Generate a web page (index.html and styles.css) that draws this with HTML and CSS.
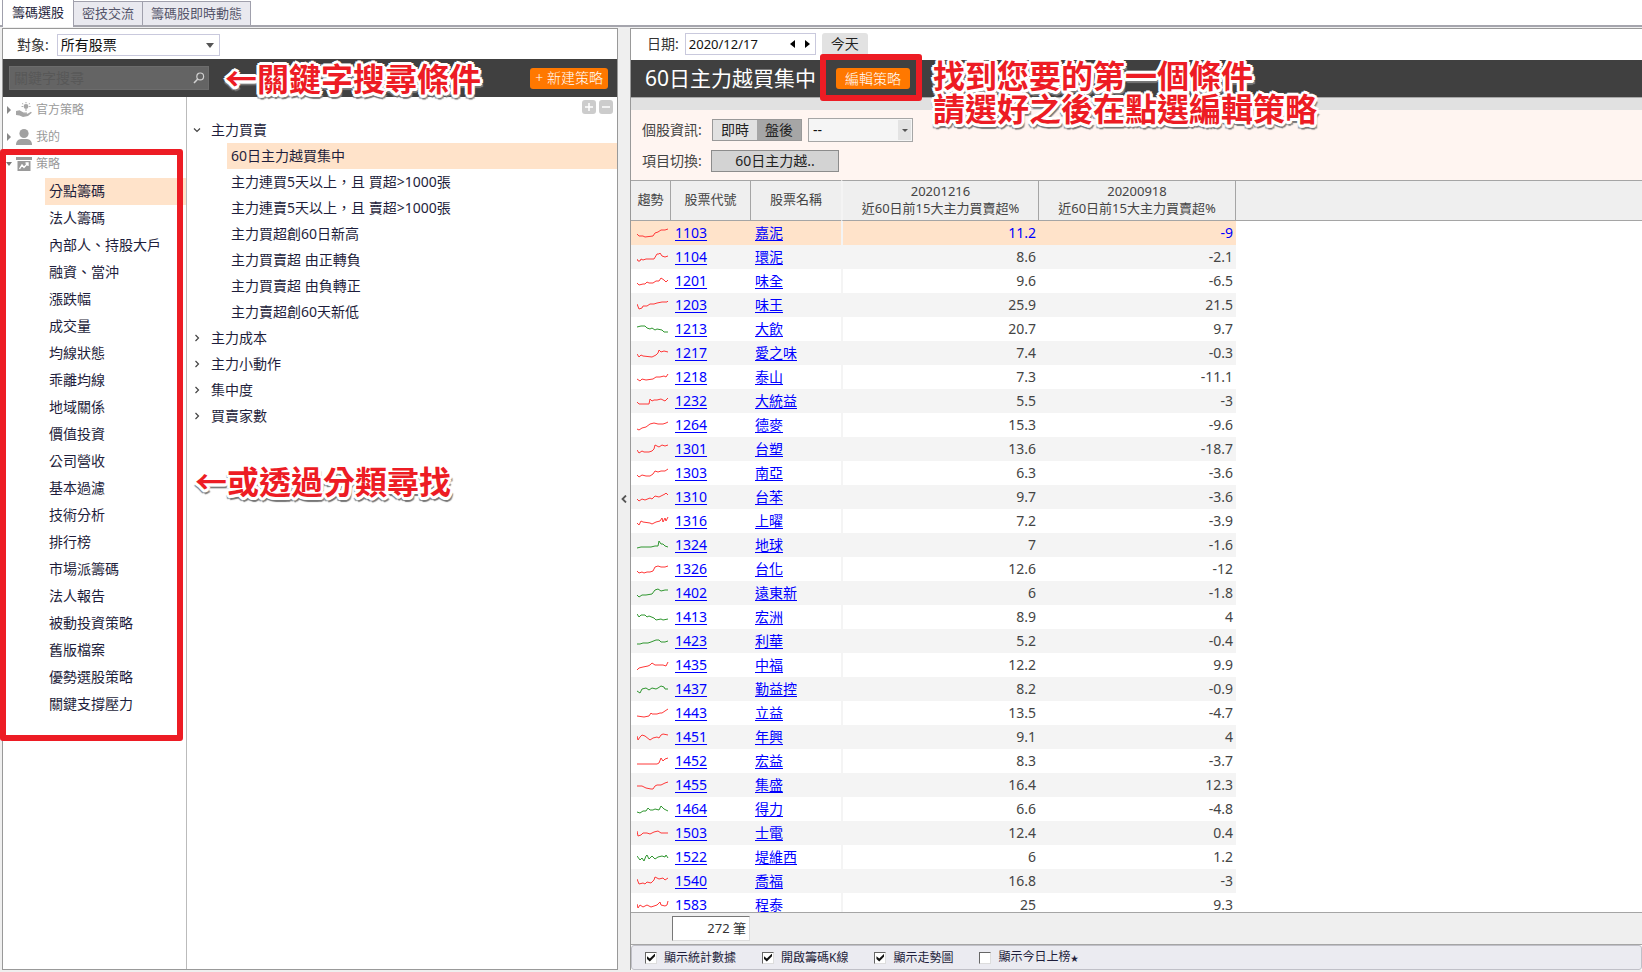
FILE: index.html
```html
<!DOCTYPE html>
<html lang="zh-Hant">
<head>
<meta charset="utf-8">
<title>籌碼選股</title>
<link rel="stylesheet" href="styles.css">
</head>
<body>
<nav class="tabs">
  <button class="tab tab-active" type="button">籌碼選股</button>
  <button class="tab" type="button">密技交流</button>
  <button class="tab" type="button">籌碼股即時動態</button>
</nav>

<main class="workspace">
  <section class="panel panel-left">
    <div class="target-row">
      <label for="target">對象:</label>
      <span class="select-wrap target-select">
        <select id="target"><option>所有股票</option></select>
        <svg class="caret" viewBox="0 0 8 5" width="8" height="5"><path d="M0 0h8L4 5z" fill="#555"/></svg>
      </span>
    </div>
    <div class="dark-bar search-bar">
      <div class="search">
        <input type="text" placeholder="關鍵字搜尋" aria-label="關鍵字搜尋">
        <svg viewBox="0 0 12 12" width="12" height="12"><circle cx="7.2" cy="4.4" r="3.4" fill="none" stroke="#d0d0d0" stroke-width="1.2"/><path d="M4.8 7L1 11" stroke="#d0d0d0" stroke-width="1.6"/></svg>
      </div>
      <button class="orange-btn" type="button">+ 新建策略</button>
    </div>
    <div class="left-body">
      <aside class="sidebar">
        <div class="group">
          <svg class="twist" viewBox="0 0 4 8" width="4" height="8"><path d="M0 0l4 4-4 4z" fill="#888"/></svg>
          <svg viewBox="0 0 16 16" width="16" height="16"><g fill="#a6a6a6"><circle cx="10" cy="4.5" r="2.4"/><path d="M9.5 0h1v1.3h-1zM5.6 4h1.3v1H5.600zM13.200 4h1.300v1h-1.300zM6.500 1l1 .9-.6.6-1-1zM13.500 1l.6.6-1 .9-.6-.6zM9 7.500h2v1H9z"/><path d="M0 9l3.500-.8 4 2.300H11v1H7l4.500.3 3.500-2 .8 1-3.800 3.200L7 15l-3.500-1.500L0 13z"/></g></svg>
          <span>官方策略</span>
        </div>
        <div class="group">
          <svg class="twist" viewBox="0 0 4 8" width="4" height="8"><path d="M0 0l4 4-4 4z" fill="#888"/></svg>
          <svg viewBox="0 0 16 16" width="16" height="16"><g fill="#a0a0a0"><ellipse cx="8" cy="4.500" rx="4.600" ry="4.500"/><path d="M0 16c0-4 2-5.500 5-6h6c3 .5 5 2 5 6z"/></g></svg>
          <span>我的</span>
        </div>
        <div class="group">
          <svg class="twist" viewBox="0 0 6 4" width="6" height="4"><path d="M0 0h6L3 4z" fill="#777"/></svg>
          <svg viewBox="0 0 16 16" width="16" height="16"><path d="M0 1h16v3H0zM1.500 5h13v10h-13z" fill="#9a9a9a"/><path d="M3.500 13l2.500-4 2 2.500L12 7M9.500 7H12v3" fill="none" stroke="#fff" stroke-width="1.400"/></svg>
          <span>策略</span>
        </div>
        <ul class="categories">
          <li class="selected">分點籌碼</li>
          <li>法人籌碼</li>
          <li>內部人、持股大戶</li>
          <li>融資、當沖</li>
          <li>漲跌幅</li>
          <li>成交量</li>
          <li>均線狀態</li>
          <li>乖離均線</li>
          <li>地域關係</li>
          <li>價值投資</li>
          <li>公司營收</li>
          <li>基本過濾</li>
          <li>技術分析</li>
          <li>排行榜</li>
          <li>市場派籌碼</li>
          <li>法人報告</li>
          <li>被動投資策略</li>
          <li>舊版檔案</li>
          <li>優勢選股策略</li>
          <li>關鍵支撐壓力</li>
        </ul>
      </aside>
      <div class="tree">
        <div class="tree-tools">
          <button type="button" aria-label="全部展開"><svg viewBox="0 0 14 14" width="14" height="14"><path d="M3 7h8M7 3v8" stroke="#fff" stroke-width="1.500"/></svg></button>
          <button type="button" aria-label="全部收合"><svg viewBox="0 0 14 14" width="14" height="14"><path d="M3 7h8" stroke="#fff" stroke-width="1.500"/></svg></button>
        </div>
        <div class="node"><svg viewBox="0 0 8 8" width="8" height="8"><path d="M1 2.500l3 3 3-3" fill="none" stroke="#444" stroke-width="1.200"/></svg>主力買賣</div>
        <ul class="leaves">
          <li class="selected">60日主力越買集中</li>
          <li>主力連買5天以上，且 買超&gt;1000張</li>
          <li>主力連賣5天以上，且 賣超&gt;1000張</li>
          <li>主力買超創60日新高</li>
          <li>主力買賣超 由正轉負</li>
          <li>主力買賣超 由負轉正</li>
          <li>主力賣超創60天新低</li>
        </ul>
        <div class="node"><svg viewBox="0 0 8 8" width="8" height="8"><path d="M2.500 1l3 3-3 3" fill="none" stroke="#444" stroke-width="1.200"/></svg>主力成本</div>
        <div class="node"><svg viewBox="0 0 8 8" width="8" height="8"><path d="M2.500 1l3 3-3 3" fill="none" stroke="#444" stroke-width="1.200"/></svg>主力小動作</div>
        <div class="node"><svg viewBox="0 0 8 8" width="8" height="8"><path d="M2.500 1l3 3-3 3" fill="none" stroke="#444" stroke-width="1.200"/></svg>集中度</div>
        <div class="node"><svg viewBox="0 0 8 8" width="8" height="8"><path d="M2.500 1l3 3-3 3" fill="none" stroke="#444" stroke-width="1.200"/></svg>買賣家數</div>
      </div>
    </div>
  </section>

  <button class="splitter" type="button" aria-label="收合"><svg viewBox="0 0 6 8" width="6" height="8"><path d="M5 .5L1.500 4 5 7.500" fill="none" stroke="#555" stroke-width="1.800"/></svg></button>

  <section class="panel panel-right">
    <div class="date-row">
      <label for="date">日期:</label>
      <div class="date-box">
        <input id="date" type="text" value="2020/12/17">
        <button type="button" aria-label="前一天"><svg viewBox="0 0 5 8" width="5" height="8"><path d="M5 0L0 4l5 4z"/></svg></button>
        <button type="button" aria-label="後一天"><svg viewBox="0 0 5 8" width="5" height="8"><path d="M0 0l5 4-5 4z"/></svg></button>
      </div>
      <button class="today" type="button">今天</button>
    </div>
    <div class="dark-bar title-bar">
      <h1>60日主力越買集中</h1>
      <button class="orange-btn" type="button">編輯策略</button>
    </div>
    <div class="strip"></div>
    <div class="filters">
      <div class="filter-row">
        <span class="filter-label">個股資訊:</span>
        <div class="toggle"><button type="button">即時</button><button class="on" type="button">盤後</button></div>
        <span class="select-wrap info-select">
          <select aria-label="個股資訊"><option>--</option></select>
          <span class="drop"><svg viewBox="0 0 6 3" width="6" height="3"><path d="M0 0h6L3 3z" fill="#555"/></svg></span>
        </span>
      </div>
      <div class="filter-row">
        <span class="filter-label">項目切換:</span>
        <button class="item-btn" type="button">60日主力越..</button>
      </div>
    </div>
    <div class="grid-area">
      <table class="grid">
        <colgroup><col class="c-trend"><col class="c-code"><col class="c-name"><col class="c-first"><col class="c-second"><col></colgroup>
        <thead>
          <tr><th>趨勢</th><th>股票代號</th><th>股票名稱</th><th class="pinned">20201216<br>近60日前15大主力買賣超%</th><th>20200918<br>近60日前15大主力買賣超%</th><th></th></tr>
        </thead>
        <tbody id="rows"></tbody>
      </table>
    </div>
    <div class="summary"><output>272 筆</output></div>
    <div class="options">
      <label><input type="checkbox" checked>顯示統計數據</label>
      <label><input type="checkbox" checked>開啟籌碼K線</label>
      <label><input type="checkbox" checked>顯示走勢圖</label>
      <label><input type="checkbox"><span>顯示今日上榜<span class="star">★</span></span></label>
    </div>
  </section>
</main>

<div class="frame frame-categories"></div>
<div class="frame frame-edit"></div>
<p class="note note-search">←關鍵字搜尋條件</p>
<p class="note note-category">←或透過分類尋找</p>
<p class="note note-edit">找到您要的第一個條件<br>請選好之後在點選編輯策略</p>
<script src="app.js"></script>
</body>
</html>
```
FILE: styles.css
```css
* { box-sizing: border-box; }
body {
  margin: 0;
  height: 100vh;
  display: flex;
  flex-direction: column;
  position: relative;
  overflow: hidden;
  background: #efefef;
  color: #1e1e3c;
  font: 400 14px/20px "Noto Sans", "Noto Sans CJK TC", sans-serif;
}
button, input, select { font: inherit; color: inherit; margin: 0; }
ul, p, h1 { margin: 0; padding: 0; list-style: none; }
svg { flex: none; display: block; }

.tabs {
  display: flex;
  align-items: flex-end;
  height: 27px;
  flex: none;
  padding-left: 2px;
  background: #fff;
  border-bottom: 2px solid #a5a5ad;
}
.tab {
  height: 24px;
  padding: 0 8px 2px;
  border: 1px solid #a0a0ac;
  border-left-width: 0;
  border-bottom: 0;
  background: #e9e9ef;
  color: #55556a;
  font-size: 13px;
  line-height: 20px;
  white-space: nowrap;
}
.tab-active {
  height: 27px;
  margin-bottom: -2px;
  padding: 0 9px 4px;
  border-left-width: 1px;
  border-top: 0;
  background: #fff;
  color: #1e1e3c;
}

.workspace { flex: 1; min-height: 0; display: flex; padding: 1px 0 2px 2px; }
.panel { display: flex; flex-direction: column; background: #fff; border: 1px solid #999; }
.panel-left { width: 616px; flex: none; }
.panel-right { flex: 1; min-width: 0; border-right: 0; border-bottom: 0; }
.splitter {
  width: 12px;
  padding: 0;
  border: 0;
  background: none;
  display: flex;
  align-items: center;
  justify-content: center;
}

.target-row, .date-row { display: flex; align-items: center; height: 30px; flex: none; color: #333; }
.target-row { padding: 2px 0 0 14px; gap: 8px; }
.select-wrap { display: grid; align-items: center; }
.select-wrap > * { grid-area: 1 / 1; }
.select-wrap select { appearance: none; background: #fff; border: 1px solid #c9c9dd; border-radius: 0; width: 100%; height: 100%; color: #111; }
.target-select { width: 163px; height: 22px; }
.target-select select { padding: 0 3px; }
.caret { justify-self: end; margin-right: 6px; pointer-events: none; }

.dark-bar { display: flex; align-items: center; height: 38px; flex: none; background: #404040; }
.search-bar { justify-content: space-between; padding: 0 9px 0 6px; }
.search { display: flex; align-items: center; width: 200px; height: 24px; padding-right: 3px; background: #646464; border: 1px solid #6c6c6c; }
.search input { flex: 1; min-width: 0; border: 0; padding: 0 4px; background: none; }
.search input::placeholder { color: #585858; opacity: 1; }
.orange-btn { height: 21px; padding: 0 5px; border: 0; border-radius: 3px; background: #ff7800; color: #fff; font-weight: 300; line-height: 20px; white-space: nowrap; }

.left-body { flex: 1; min-height: 0; display: flex; }
.sidebar { width: 184px; border-right: 1px solid #bbb; }
.group { display: flex; align-items: center; height: 27px; padding: 0 0 2px 3px; gap: 4px; color: #999; font-size: 12px; }
.group .twist { width: 6px; }
.categories { padding-left: 42px; }
.categories li { height: 27px; padding-left: 4px; line-height: 26px; }
.selected { background: #ffe3ca; }

.tree { flex: 1; padding-top: 20px; position: relative; }
.tree-tools { position: absolute; top: 3px; right: 4px; display: flex; gap: 3px; }
.tree-tools button { width: 14px; height: 14px; padding: 0; border: 0; border-radius: 3px; background: #ccc; }
.node { display: flex; align-items: center; gap: 10px; height: 26px; padding-left: 6px; }
.leaves { padding-left: 40px; }
.leaves li { height: 26px; padding-left: 4px; line-height: 26px; }

.date-row { padding: 0 0 2px 16px; gap: 6px; height: 31px; }
.date-box { display: flex; align-items: center; width: 131px; height: 22px; border: 1px solid #c9c9dd; color: #111; }
.date-box input { flex: 1; min-width: 0; padding: 0 3px; border: 0; background: none; font-size: 13px; }
.date-box button { width: 15px; padding: 0 5px; border: 0; background: none; }
.today { align-self: stretch; margin-top: 4px; margin-bottom: -1px; width: 46px; padding: 0 0 4px; border: 0; border-radius: 3px 3px 0 0; background: #e2e2e2; color: #222; }
.title-bar { height: 37px; padding-left: 14px; gap: 20px; }
.title-bar h1 { padding-bottom: 2px; color: #fff; font-size: 21px; font-weight: 400; line-height: 30px; white-space: nowrap; }
.title-bar .orange-btn { padding: 0 9px; }
.strip { height: 13px; flex: none; background: #e1e1e1; border-top: 1px solid #a8a8a8; }
.filters { display: flex; flex-direction: column; gap: 7px; height: 70px; flex: none; padding: 8px 0 0 11px; background: #fff5f1; color: #444; }
.filter-row { display: flex; align-items: center; height: 24px; }
.filter-label { width: 70px; }
.toggle { display: flex; width: 90px; height: 22px; border: 1px solid #999; }
.toggle button { flex: 1; padding: 0; border: 0; background: #e1e1e1; color: #222; line-height: 20px; }
.toggle .on { background: #a6a6a6; }
.info-select { width: 105px; height: 24px; margin-left: 6px; }
.info-select select { background: #f5f5f5; border-color: #a6a6a6; padding: 0 4px; }
.drop { justify-self: end; display: flex; align-items: center; justify-content: center; width: 13px; height: 20px; margin-right: 2px; background: #e3e3e3; pointer-events: none; }
.item-btn { width: 128px; height: 22px; margin-left: -1px; padding: 0; border: 1px solid #8c8c8c; background: #d3d3d3; color: #222; line-height: 20px; }

.grid-area { flex: 1; min-height: 0; overflow: hidden; border-bottom: 1px solid #a5a5a5; }
.grid { width: 100%; table-layout: fixed; border-collapse: separate; border-spacing: 0; color: #444; }
.c-trend { width: 40px; }
.c-code { width: 80px; }
.c-name { width: 90px; }
.c-first { width: 198px; }
.c-second { width: 197px; }
.grid th {
  height: 41px;
  padding: 0 0 2px;
  background: #efefef;
  border: 1px solid #a5a5a5;
  border-left: 0;
  font-size: 13px;
  font-weight: 400;
  line-height: 17px;
  white-space: nowrap;
}
.grid th:nth-child(3) { border-right: 0; }
.grid th:last-child { border-right: 0; }
.grid td { height: 24px; padding: 0 3px; line-height: 22px; white-space: nowrap; }
.grid td:nth-child(2), .grid td:nth-child(3) { padding-left: 4px; }
.grid td:first-child { padding: 0 0 0 6px; }
.grid .pinned { border-left: 2px solid #f4f4f4; }
.grid .num { text-align: right; }
.grid tbody tr:nth-child(even) td:not(:last-child) { background: #f4f4f4; }
.grid tbody tr:first-child td:not(:last-child) { background: #ffe3ca; }
.grid tbody tr:first-child .num { color: #00f; }
.grid a { color: #00f; text-decoration: underline; text-underline-offset: 2px; }
.up { stroke: #ff3838; }
.down { stroke: #2f962f; }

.summary { display: flex; align-items: flex-start; height: 32px; flex: none; padding: 3px 0 0 41px; background: #efefef; border-bottom: 1px solid #a5a5a5; }
.summary output { width: 78px; height: 25px; padding-right: 3px; background: #fff; border: 1px solid #ddd; border-top-color: #777; border-left-color: #777; color: #333; font-size: 13px; line-height: 23px; text-align: right; }
.options { display: flex; align-items: center; gap: 26px; height: 25px; flex: none; padding-left: 13px; background: #ebebf1; border: 1px solid #c0c0c8; border-radius: 3px; font-size: 12px; }
.options label { display: flex; align-items: center; gap: 7px; }
.star { font-size: 8px; }
.options input { appearance: none; width: 12px; height: 12px; background: #fff; border: 1px solid #ddd; border-top: 1px solid #666; border-left: 1px solid #666; }
.options input:checked::after { content: ""; display: block; width: 8px; height: 8px; margin: 1px; background: #111; clip-path: polygon(0 35%, 35% 62%, 100% 0, 100% 35%, 35% 100%, 0 70%); }

.frame { position: absolute; border: 6px solid #ed1c24; border-radius: 3px; pointer-events: none; }
.frame-categories { left: 0; top: 149px; width: 183px; height: 592px; }
.frame-edit { left: 820px; top: 54px; width: 102px; height: 47px; }
.note {
  position: absolute;
  color: #ed1c24;
  font-size: 32px;
  font-weight: 700;
  line-height: 33px;
  white-space: nowrap;
  pointer-events: none;
  font-family: "Noto Sans CJK TC", sans-serif;
  text-shadow: 3px 0 #fff, -3px 0 #fff, 0 3px #fff, 0 -3px #fff, 2px 2px #fff, -2px 2px #fff, 2px -2px #fff, -2px -2px #fff, 1px 3px #fff, -1px 3px #fff, 1px 5px 1px #777, 3px 4px 1px #888, -2px 4px 1px #888;
}
.note-search { left: 225px; top: 61px; }
.note-category { left: 195px; top: 464px; }
.note-edit { left: 933px; top: 58px; }
```
FILE: app.js
```js
// code, name, latest value, earlier value, direction, trend line points
const stocks = [
  ["1103", "嘉泥", "11.2", "-9", "up", "0,13 2,15 6,15 8,16 16,15 18,12 21,11 24,9 28,9 31,8"],
  ["1104", "環泥", "8.6", "-2.1", "up", "0,14 1,16 3,16 4,14 6,15 9,14 17,14 20,9 22,9 23,8 25,11 28,12 31,11"],
  ["1201", "味全", "9.6", "-6.5", "up", "0,14 2,16 6,15 8,15 10,13 12,14 16,14 19,12 22,12 24,9 27,11 29,13 31,11"],
  ["1203", "味王", "25.9", "21.5", "up", "0,11 2,16 5,15 6,13 10,13 13,11 17,11 20,10 25,9 30,9 31,8"],
  ["1213", "大飲", "20.7", "9.7", "down", "0,10 4,9 8,9 10,11 13,12 15,11 18,13 20,12 25,13 27,15 31,15"],
  ["1217", "愛之味", "7.4", "-0.3", "up", "0,13 2,16 4,14 6,15 15,16 19,14 21,12 22,9 24,11 27,10 31,11"],
  ["1218", "泰山", "7.3", "-11.1", "up", "0,14 3,16 5,14 9,15 16,14 19,12 23,12 27,11 29,12 31,9"],
  ["1232", "大統益", "5.5", "-3", "up", "0,13 2,15 9,15 12,15 13,10 15,12 17,11 20,11 24,10 26,11 28,12 31,9"],
  ["1264", "德麥", "15.3", "-9.6", "up", "0,16 2,17 5,15 9,14 13,11 17,10 21,11 26,11 29,10 31,9"],
  ["1301", "台塑", "13.6", "-18.7", "up", "0,13 2,16 5,14 7,15 12,15 15,14 17,12 18,8 22,10 25,8 28,9 31,8"],
  ["1303", "南亞", "6.3", "-3.6", "up", "0,14 2,16 5,14 9,15 13,15 16,13 18,10 21,11 24,10 28,10 31,8"],
  ["1310", "台苯", "9.7", "-3.6", "up", "0,14 2,16 5,14 8,15 13,13 15,14 18,11 22,12 26,10 28,9 29,8 31,10"],
  ["1316", "上曜", "7.2", "-3.9", "up", "0,14 2,16 4,12 6,13 13,14 15,15 19,13 23,12 25,9 26,13 28,9 29,12 31,8"],
  ["1324", "地球", "7", "-1.6", "down", "0,15 4,14 8,14 14,14 18,13 21,13 22,8 24,11 26,11 28,13 31,14"],
  ["1326", "台化", "12.6", "-12", "up", "0,14 2,16 5,15 7,16 10,15 13,15 16,14 18,10 21,9 24,10 28,10 31,9"],
  ["1402", "遠東新", "6", "-1.8", "down", "0,14 2,16 5,14 9,14 15,13 18,9 21,8 24,10 28,9 31,9"],
  ["1413", "宏洲", "8.9", "4", "down", "0,9 2,12 4,10 8,10 10,12 12,11 17,13 19,15 24,14 26,15 31,14"],
  ["1423", "利華", "5.2", "-0.4", "down", "0,15 3,15 6,14 11,14 14,13 19,11 22,11 24,13 28,13 31,12"],
  ["1435", "中福", "12.2", "9.9", "up", "0,17 2,15 6,14 11,13 13,12 15,10 18,12 22,12 26,12 29,13 31,9"],
  ["1437", "勤益控", "8.2", "-0.9", "down", "0,14 3,16 5,12 9,11 12,13 15,11 19,12 21,11 24,9 27,10 28,12 31,12"],
  ["1443", "立益", "13.5", "-4.7", "up", "0,15 7,16 12,15 14,12 15,13 20,13 23,12 25,12 28,10 31,8"],
  ["1451", "年興", "9.1", "4", "up", "0,11 1,15 3,12 5,10 8,11 13,15 16,13 20,12 22,13 24,10 26,9 31,10"],
  ["1452", "宏益", "8.3", "-3.7", "up", "0,15 7,15 12,15 20,15 22,14 24,9 26,12 28,10 31,9"],
  ["1455", "集盛", "16.4", "12.3", "up", "0,13 5,13 9,15 14,16 16,16 18,13 20,12 24,12 28,10 31,9"],
  ["1464", "得力", "6.6", "-4.8", "down", "0,15 3,16 6,14 9,14 11,11 13,13 16,13 18,12 22,13 24,9 27,12 31,14"],
  ["1503", "士電", "12.4", "0.4", "up", "0,10 1,15 4,14 6,12 10,12 13,13 17,11 21,10 24,12 27,12 31,12"],
  ["1522", "堤維西", "6", "1.2", "down", "0,11 3,15 5,13 7,16 9,11 10,10 12,14 15,11 18,14 21,12 25,11 28,12 29,10 31,13"],
  ["1540", "喬福", "16.8", "-3", "up", "0,10 2,15 6,14 8,15 10,13 14,14 17,11 18,8 22,10 26,9 28,11 31,9"],
  ["1583", "程泰", "25", "9.3", "up", "0,11 1,15 3,12 6,14 10,12 14,14 20,12 23,9 24,12 28,13 30,12 31,8"]
];

document.getElementById("rows").innerHTML = stocks.map(([code, name, latest, earlier, dir, points]) => `
  <tr>
    <td><svg viewBox="0 0 32 24" width="32" height="24"><polyline class="${dir}" points="${points}" fill="none"/></svg></td>
    <td><a href="#${code}">${code}</a></td>
    <td><a href="#${code}">${name}</a></td>
    <td class="num pinned">${latest}</td>
    <td class="num">${earlier}</td>
    <td></td>
  </tr>`).join("");
```
